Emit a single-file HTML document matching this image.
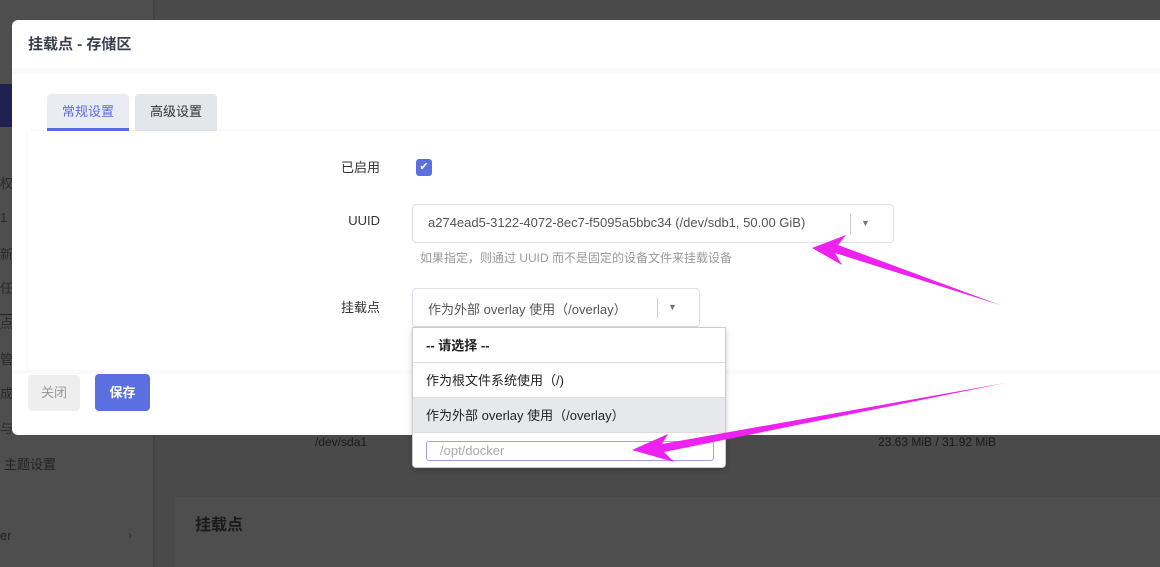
<!DOCTYPE html>
<html><head><meta charset="utf-8"><style>
*{box-sizing:border-box;margin:0;padding:0}
body{width:1160px;height:567px;overflow:hidden;position:relative;background:#4a4a4a;font-family:"Liberation Sans","Noto Sans CJK SC",sans-serif;font-size:13px;color:#333}
.abs{position:absolute}
.side{left:0;top:0;width:155px;height:567px;background:#4e4e4e;border-right:2px solid #444}
.modal{left:12px;top:20px;width:1160px;height:415px;background:#fff;border-radius:6px;overflow:hidden}
.lbl{width:120px;text-align:right;font-size:13px;color:#333}
.sel{border:1px solid #dcdfe6;border-radius:4px;background:#fff;color:#555;font-size:13px}
.sep{position:absolute;top:9px;width:1px;height:20px;background:#ccc}
.tri{position:absolute;top:12px;font-size:9px;color:#777}
.dd div{height:35px;line-height:35px;padding-left:13px;border-bottom:1px solid #ddd;font-size:13px;color:#222}
.st{position:absolute;left:0;font-size:13px;color:#2a2a2a}
</style></head><body>
<div class="abs side"></div>
<div class="abs" style="left:0;top:84px;width:12px;height:43px;background:#1f2150"></div>
<div class="st" style="top:173px">权</div>
<div class="st" style="top:210px">1</div>
<div class="st" style="top:244px">新</div>
<div class="st" style="top:278px">任务</div>
<div class="st" style="top:313px">点</div>
<div class="st" style="top:349px">管理</div>
<div class="st" style="top:383px">成务</div>
<div class="st" style="top:418px">与升</div>
<div class="abs" style="left:175px;top:497px;width:985px;height:70px;background:#4e4e4e"></div>
<div class="abs" style="left:195px;top:511px;font-size:16px;font-weight:bold;color:#1a1a1a">挂载点</div>
<div class="abs" style="left:315px;top:435px;font-size:12px;color:#1a1a1a">/dev/sda1</div>
<div class="abs" style="left:878px;top:435px;font-size:12px;color:#1a1a1a">23.63 MiB / 31.92 MiB</div>
<div class="abs" style="left:4px;top:454px;font-size:13px;color:#222">主题设置</div>
<div class="abs" style="left:0;top:528px;font-size:13px;color:#222">er</div>
<div class="abs" style="left:128px;top:528px;font-size:12px;color:#333">›</div>
<div class="abs" style="left:0;top:314px;width:12px;height:1px;background:#222"></div>

<div class="abs modal">
  <div class="abs" style="left:16px;top:13px;font-size:15px;font-weight:bold;color:#3a3f4f">挂载点 - 存储区</div>
  <div class="abs" style="left:0;top:48px;width:1148px;height:6px;background:#fafafb"></div>
  <div class="abs" style="left:35px;top:74px;width:82px;height:37px;background:#e9ecf2;border-radius:4px 4px 0 0;border-bottom:3px solid #5b6dde;color:#5b6dde;text-align:center;line-height:36px">常规设置</div>
  <div class="abs" style="left:123px;top:74px;width:82px;height:37px;background:#e3e6eb;border-radius:4px 4px 0 0;color:#333;text-align:center;line-height:36px">高级设置</div>
  <div class="abs" style="left:16px;top:111px;width:1132px;height:240px;background:#fff;box-shadow:0 0 4px rgba(0,0,0,.05)"></div>
  <div class="abs" style="left:0;top:350px;width:1148px;height:4px;background:#fafafb"></div>
  <div class="abs lbl" style="left:248px;top:137px">已启用</div>
  <div class="abs" style="left:404px;top:139px;width:16px;height:17px;background:#5b6fe0;border-radius:3px;color:#fff;font-size:11px;text-align:center;line-height:17px">✔</div>
  <div class="abs lbl" style="left:248px;top:193px">UUID</div>
  <div class="abs sel" style="left:400px;top:184px;width:482px;height:39px"><span class="abs" style="left:15px;top:10px">a274ead5-3122-4072-8ec7-f5095a5bbc34 (/dev/sdb1, 50.00 GiB)</span><span class="sep" style="left:437px"></span><span class="tri" style="left:448px;top:13px">▼</span></div>
  <div class="abs" style="left:408px;top:229px;font-size:12px;color:#999">如果指定，则通过 UUID 而不是固定的设备文件来挂载设备</div>
  <div class="abs lbl" style="left:248px;top:277px">挂载点</div>
  <div class="abs sel" style="left:400px;top:268px;width:288px;height:39px"><span class="abs" style="left:15px;top:10px">作为外部 overlay 使用（/overlay）</span><span class="sep" style="left:244px"></span><span class="tri" style="left:255px;top:13px">▼</span></div>
  <div class="abs" style="left:16px;top:355px;width:52px;height:36px;background:#eee;border-radius:4px;color:#999;text-align:center;line-height:36px">关闭</div>
  <div class="abs" style="left:83px;top:354px;width:55px;height:37px;background:#5b6fe0;border-radius:4px;color:#fff;font-weight:bold;text-align:center;line-height:37px">保存</div>
</div>

<div class="abs dd" style="left:412px;top:327px;width:314px;height:141px;background:#fff;border:1px solid #ccc;border-radius:0 0 4px 4px;box-shadow:0 2px 6px rgba(0,0,0,.2)">
  <div style="font-weight:bold">-- 请选择 --</div>
  <div>作为根文件系统使用（/)</div>
  <div style="background:#e6e8ec">作为外部 overlay 使用（/overlay）</div>
  <div style="border:none;padding:0"><div class="abs" style="left:13px;top:113px;width:288px;height:20px;border:1px solid #a59be6;border-radius:3px;line-height:18px;padding-left:13px;color:#aaa;font-size:13px">/opt/docker</div></div>
</div>

<svg class="abs" style="left:0;top:0" width="1160" height="567">
  <polygon points="812,248 846,235 838,245 1000,305 835,253 842,265" fill="#ee22ee"/>
  <polygon points="632,450 668,434 662,444 1005,383 664,452 674,462" fill="#ee22ee"/>
</svg>
</body></html>
